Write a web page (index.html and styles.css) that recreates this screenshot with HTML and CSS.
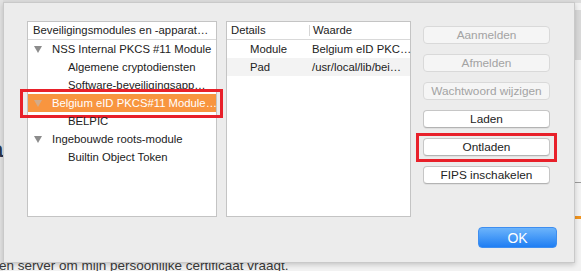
FILE: index.html
```html
<!DOCTYPE html>
<html>
<head>
<meta charset="utf-8">
<link rel="stylesheet" href="styles.css">
</head>
<body>
<div class="page">
  <div class="page-top"></div>
  <div class="page-title">a</div>
  <p class="page-text">en server om mijn persoonlijke certificaat vraagt.</p>
</div>
<div class="page-side">
  <div class="side-bar"></div>
  <div class="side-line"></div>
  <div class="side-orange"></div>
</div>
<div class="sheet">
  <div class="panes">
    <div class="table tree">
      <div class="thead"><div class="th">Beveiligingsmodules en -apparat…</div></div>
      <div class="row l0"><span class="tri"></span>NSS Internal PKCS #11 Module</div>
      <div class="row l1">Algemene cryptodiensten</div>
      <div class="row l1">Software-beveiligingsapp…</div>
      <div class="row l0 selected"><span class="tri"></span>Belgium eID PKCS#11 Module…</div>
      <div class="row l1">BELPIC</div>
      <div class="row l0"><span class="tri"></span>Ingebouwde roots-module</div>
      <div class="row l1">Builtin Object Token</div>
    </div>
    <div class="table details">
      <div class="thead"><div class="th c1">Details</div><div class="th c2">Waarde</div></div>
      <div class="row"><span class="c1">Module</span><span class="c2">Belgium eID PKC…</span></div>
      <div class="row alt"><span class="c1">Pad</span><span class="c2">/usr/local/lib/bei…</span></div>
    </div>
    <div class="buttons">
      <button class="btn" disabled>Aanmelden</button>
      <button class="btn" disabled>Afmelden</button>
      <button class="btn" disabled>Wachtwoord wijzigen</button>
      <button class="btn">Laden</button>
      <button class="btn marked">Ontladen</button>
      <button class="btn">FIPS inschakelen</button>
    </div>
  </div>
  <div class="footer"><button class="ok">OK</button></div>
</div>
</body>
</html>
```
FILE: styles.css
```css
* { box-sizing: border-box; }
html, body { margin: 0; padding: 0; }
body {
  width: 581px;
  height: 271px;
  overflow: hidden;
  background: #f2f2f2;
  font-family: "Liberation Sans", Arial, sans-serif;
  position: relative;
}
.page {
  height: 271px;
  display: flex;
  flex-direction: column;
  border-left: 3px solid #e2e2e2;
}
.page-top {
  height: 3px;
  background: #dcdcdc;
}
.page-title {
  margin: 134px 0 0 -12px;
  font-size: 22px;
  font-weight: bold;
  color: #2b3449;
  line-height: 26px;
}
.page-text {
  margin: auto 0 0 -4px;
  font-size: 13.5px;
  line-height: 18px;
  color: #3a3a3a;
  white-space: nowrap;
  position: relative;
  top: 4px;
}
.page-side {
  position: absolute;
  right: 0;
  top: 0;
  width: 6px;
  height: 271px;
  display: flex;
  flex-direction: column;
}
.side-bar { height: 50px; margin-top: 10px; background: #d8d8d8; }
.side-line { height: 1px; margin-top: 122px; background: #9a9a9a; }
.side-orange { height: 3px; margin-top: 33px; background: #f0931e; }

.sheet {
  position: absolute;
  left: 3px;
  top: 2px;
  width: 572px;
  height: 261px;
  background: #ececec;
  border: 1px solid #c9c9c9;
  box-shadow: 0 2px 5px rgba(0,0,0,0.18);
  padding: 18px 17px 0 23px;
  font-size: 12px;
  color: #222;
}
.panes {
  display: flex;
  height: 196px;
}
.table {
  background: #fff;
  border: 1px solid #c4c4c4;
  height: 196px;
  font-size: 11.3px;
}
.tree { width: 190px; }
.details { width: 185px; margin-left: 9px; }
.thead {
  height: 18px;
  border-bottom: 1px solid #d9d9d9;
  display: flex;
  align-items: center;
}
.th {
  padding-left: 5px;
  white-space: nowrap;
  line-height: 17px;
}
.row {
  height: 18px;
  line-height: 18px;
  white-space: nowrap;
  display: flex;
  align-items: center;
  position: relative;
}
.tree .l0 { padding-left: 6px; }
.tree .l1 { padding-left: 40px; }
.tri {
  width: 0;
  height: 0;
  border-left: 4px solid transparent;
  border-right: 4px solid transparent;
  border-top: 7px solid #8c8c8c;
  margin-right: 10px;
}
.selected {
  background: #f8953f;
  color: #fff;
}
.selected .tri { border-top-color: #d2ab8a; }
.selected::after {
  content: "";
  position: absolute;
  top: -5px;
  bottom: -6px;
  left: -8px;
  right: -7px;
  border: 3px solid #e8202a;
}
.details .c1 { width: 82px; flex: none; }
.details .c2 { padding-left: 3px; }
.details .thead .c1 { padding-left: 4px; }
.details .thead .c2 {
  border-left: 1px solid #d6d6d6;
  line-height: 11px;
  padding-left: 3px;
}
.details .row .c1 { padding-left: 23px; }
.details .row .c2 { padding-left: 3px; }
.details .alt { background: #f3f3f3; }

.buttons {
  width: 127px;
  margin-left: 12px;
  padding-top: 5px;
  display: flex;
  flex-direction: column;
  gap: 10px;
}
.btn {
  height: 18px;
  padding: 0;
  font-family: inherit;
  font-size: 11.8px;
  color: #222;
  background: #fff;
  border: 1px solid #c6c6c6;
  border-bottom-color: #b3b3b3;
  border-radius: 4px;
  box-shadow: 0 1px 0 rgba(0,0,0,0.05);
  position: relative;
}
.btn:disabled {
  background: #f5f5f5;
  color: #a3a3a3;
  border-color: #d9d9d9;
  box-shadow: none;
}
.marked::after {
  content: "";
  position: absolute;
  top: -6px;
  bottom: -7px;
  left: -8px;
  right: -8px;
  border: 3px solid #e8202a;
}
.footer {
  display: flex;
  justify-content: flex-end;
  margin-top: 10px;
}
.ok {
  width: 79px;
  height: 21px;
  padding: 0;
  border: 1px solid #3e8ef0;
  border-radius: 4px;
  background: linear-gradient(#6cb4fb, #1f7ef3);
  color: #fff;
  font-family: inherit;
  font-size: 14px;
}
```
